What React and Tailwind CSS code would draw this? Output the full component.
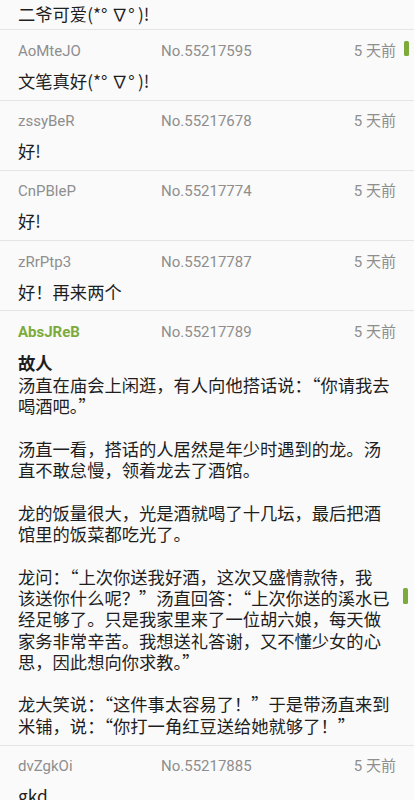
import React from "react";

const HEAD_FONT = { fontFamily: 'Roboto, "Noto Sans CJK SC", sans-serif' };
const BODY_FONT = { fontFamily: '"Noto Sans CJK SC", "Noto Sans", sans-serif' };

const posts = [
  { name: "AoMteJO", no: "No.55217595", lines: ["文笔真好(*°\u2009∇°\u2009)!"] },
  { name: "zssyBeR", no: "No.55217678", lines: ["好!"] },
  { name: "CnPBleP", no: "No.55217774", lines: ["好!"] },
  { name: "zRrPtp3", no: "No.55217787", lines: ["好！再来两个"] },
  {
    name: "AbsJReB",
    no: "No.55217789",
    op: true,
    title: "故人",
    lines: [
      "汤直在庙会上闲逛，有人向他搭话说：“你请我去",
      "喝酒吧。”",
      "",
      "汤直一看，搭话的人居然是年少时遇到的龙。汤",
      "直不敢怠慢，领着龙去了酒馆。",
      "",
      "龙的饭量很大，光是酒就喝了十几坛，最后把酒",
      "馆里的饭菜都吃光了。",
      "",
      "龙问：“上次你送我好酒，这次又盛情款待，我",
      "该送你什么呢？”汤直回答：“上次你送的溪水已",
      "经足够了。只是我家里来了一位胡六娘，每天做",
      "家务非常辛苦。我想送礼答谢，又不懂少女的心",
      "思，因此想向你求教。”",
      "",
      "龙大笑说：“这件事太容易了！”于是带汤直来到",
      "米铺，说：“你打一角红豆送给她就够了！”",
    ],
  },
  { name: "dvZgkOi", no: "No.55217885", lines: ["gkd"] },
];

function Post({ p }) {
  return (
    <div className="border-b border-[#e4e4e4] px-[18px] pt-[10.5px] pb-[8.5px]">
      <div
        className="grid grid-cols-[143px_1fr_auto] items-center h-[20px] text-[15px] leading-[20px] text-[#8e8e8e]"
        style={HEAD_FONT}
      >
        <span className={p.op ? "font-bold text-[#7cab3c]" : ""}>{p.name}</span>
        <span>{p.no}</span>
        <span>5 天前</span>
      </div>
      <div className="mt-[9px] text-[17.3px] leading-[21.3px] text-[#1e1e1e] whitespace-nowrap" style={BODY_FONT}>
        {p.title && <div className="font-bold leading-[23px]">{p.title}</div>}
        {p.lines.map((l, i) => (
          <div key={i} className="h-[21.3px]">
            {l || "\u00a0"}
          </div>
        ))}
      </div>
    </div>
  );
}

export default function App() {
  return (
    <div className="relative h-[800px] w-[414px] overflow-hidden bg-[#fafafa]">
      <div className="border-b border-[#e4e4e4] px-[18px] pt-[3px] pb-[5px]">
        <div className="text-[17.3px] leading-[21.3px] text-[#1e1e1e]" style={BODY_FONT}>
          {"二爷可爱(*°\u2009∇°\u2009)!"}
        </div>
      </div>
      {posts.map((p) => (
        <Post key={p.no} p={p} />
      ))}
      <div className="absolute left-[404px] top-[41px] h-[15px] w-[5px] rounded-[1.5px] bg-[#7cab3c]" />
      <div className="absolute left-[403px] top-[588px] h-[16px] w-[4.5px] rounded-[1.5px] bg-[#7cab3c]" />
    </div>
  );
}
